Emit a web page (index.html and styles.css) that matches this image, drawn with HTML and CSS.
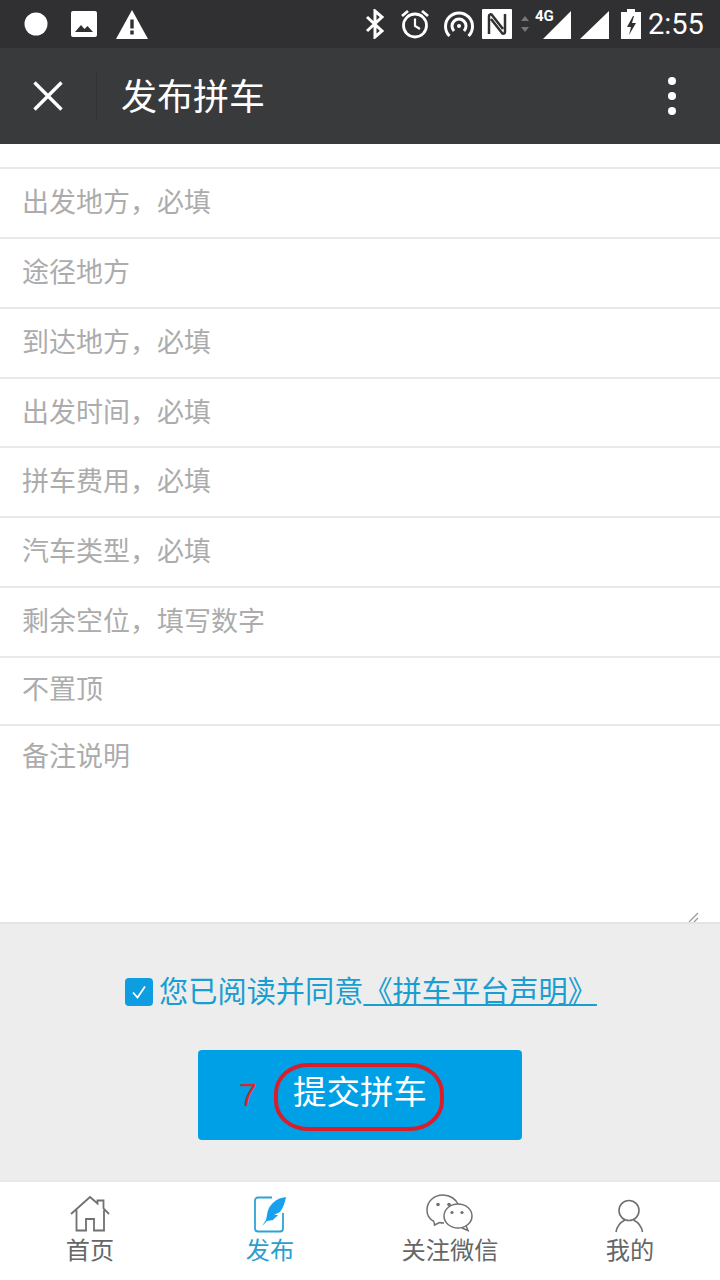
FILE: index.html
```html
<!DOCTYPE html>
<html lang="zh">
<head>
<meta charset="utf-8">
<title>发布拼车</title>
<link rel="stylesheet" href="styles.css">
</head>
<body>
<div class="app">
  <div class="status">
    <div class="status-left">
      <svg class="i" width="24" height="24" viewBox="0 0 24 24"><circle cx="12" cy="12" r="11.500" fill="#fff"/></svg>
      <svg class="i" width="26" height="26" viewBox="0 0 26 26"><rect width="26" height="26" rx="2" fill="#fff"/><path d="M4 21l6-7 3.500 4 3-3 5.500 6z" fill="#303033"/></svg>
      <svg class="i" width="32" height="29" viewBox="0 0 32 29"><path d="M16 0l16 29H0z" fill="#fff"/><rect x="14.300" y="9.500" width="3.400" height="9" fill="#303033"/><rect x="14.300" y="20.500" width="3.400" height="4" fill="#303033"/></svg>
    </div>
    <div class="status-right">
      <svg class="bt" width="20" height="30" viewBox="0 0 20 30"><path d="M2 8l15 14-7 6V2l7 6L2 22" fill="none" stroke="#fff" stroke-width="3"/></svg>
      <svg class="alarm" width="30" height="30" viewBox="0 0 30 30" fill="none" stroke="#fff"><circle cx="15" cy="16.500" r="11.500" stroke-width="2.800"/><path d="M15 9.500V17l5 3" stroke-width="2.200"/><path d="M2 7l6-5M28 7l-6-5" stroke-width="2.800"/></svg>
      <svg class="hot" width="30" height="28" viewBox="0 0 30 28" fill="none" stroke="#fff" stroke-width="3"><path d="M5.500 26a13.500 13.500 0 1 1 19 0"/><path d="M10 21a7 7 0 1 1 10 0"/><circle cx="15" cy="16" r="2" fill="#fff" stroke="none"/></svg>
      <svg class="nfc" width="30" height="30" viewBox="0 0 30 30"><rect width="30" height="30" rx="1" fill="#fff"/><path d="M7 25V7c0-2 2-2 3-1l11 14M23 5v18c0 2-2 2-3 1L9 10" fill="none" stroke="#303033" stroke-width="2.500"/></svg>
      <svg class="arrows" width="10" height="18" viewBox="0 0 10 18"><path d="M5 1l4 5H1zM5 17l4-5H1z" fill="#77777a"/></svg>
      <div class="sig4g"><span class="g4">4G</span><svg width="28" height="28" viewBox="0 0 28 28"><path d="M28 0v28H0z" fill="#fff"/></svg></div>
      <svg class="sig" width="29" height="28" viewBox="0 0 29 28"><path d="M29 0v28H0z" fill="#fff"/></svg>
      <svg class="bat" width="20" height="30" viewBox="0 0 20 30"><path d="M6 0h8v3h6v27H0V3h6z" fill="#fff"/><path d="M12 7l-6 11h4l-2 8 7-12h-4l2-7z" fill="#303033"/></svg>
      <span class="time">2:55</span>
    </div>
  </div>
  <div class="bar">
    <svg class="close" width="30" height="30" viewBox="0 0 30 30"><path d="M1.500 1.500l27 27M28.500 1.500l-27 27" stroke="#fff" stroke-width="3.400" fill="none"/></svg>
    <div class="bar-sep"></div>
    <div class="bar-title">发布拼车</div>
    <div class="dots"><i></i><i></i><i></i></div>
  </div>
  <div class="form">
    <div class="row row-cut"><span class="ph ph-cut">联系电话，必填</span></div>
    <div class="row"><span class="ph">出发地方，必填</span></div>
    <div class="row"><span class="ph">途径地方</span></div>
    <div class="row"><span class="ph">到达地方，必填</span></div>
    <div class="row row-s"><span class="ph">出发时间，必填</span></div>
    <div class="row"><span class="ph">拼车费用，必填</span></div>
    <div class="row"><span class="ph">汽车类型，必填</span></div>
    <div class="row"><span class="ph">剩余空位，填写数字</span></div>
    <div class="row row-t"><span class="ph">不置顶</span></div>
    <div class="note">
      <span class="ph">备注说明</span>
      <svg class="grip" width="12" height="10" viewBox="0 0 12 10"><path d="M2 10L11 1M7 10l4-4" stroke="#9a9a9a" stroke-width="1.300" fill="none"/></svg>
    </div>
  </div>
  <div class="submit-area">
    <div class="agree">
      <svg class="check" width="28" height="28" viewBox="0 0 28 28"><rect width="28" height="28" rx="4" fill="#0f9de2"/><path d="M8 14.500l4.500 5L20 8.500" stroke="#fff" stroke-width="1.800" fill="none"/></svg>
      <span class="agree-text">您已阅读并同意<a class="agree-link">《拼车平台声明》</a></span>
    </div>
    <div class="btn">
      <span class="btn-text">提交拼车</span>
      <span class="mark-num">7</span>
      <span class="mark-ring"></span>
    </div>
  </div>
  <div class="tabs">
    <div class="tab">
      <svg class="tab-ico" width="40" height="36" viewBox="0 0 40 36" fill="none" stroke="#707070" stroke-width="1.800"><path d="M1 18L20 1l7.500 6.500V4.500h6v8L39 18M6.500 14v20.500h9.500V23h8v11.500h10V14"/></svg>
      <span class="tab-label">首页</span>
    </div>
    <div class="tab tab-on">
      <svg class="tab-ico" width="40" height="36" viewBox="0 0 40 36" fill="none"><path d="M22 1.500H8a3 3 0 0 0-3 3v28a3 3 0 0 0 3 3h22a3 3 0 0 0 3-3V17" stroke="#2fa3d6" stroke-width="1.800"/><path d="M36 1c-10 1-18 8-19 18l-1 5-4 6 5-5 6-1c1-2 4-3 5-5l-4 0 6-3c3-4 5-9 6-15z" fill="#17a0ef"/></svg>
      <span class="tab-label">发布</span>
    </div>
    <div class="tab">
      <svg class="tab-ico tab-ico-tall" width="48" height="38" viewBox="0 0 48 38" fill="none" stroke="#707070" stroke-width="1.500"><path d="M8 27.500C3 25 1 21 1 16 1 7.500 8 1 17 1c7 0 13 4 15.500 10M8 27.500l.500 3.500 5-2.500c1.500.500 3 .500 4.500.500"/><ellipse cx="32" cy="22" rx="14" ry="12" fill="#fff"/><path d="M40 31.500l2 5-6-2.500"/><g fill="#707070" stroke="none"><circle cx="12" cy="10.500" r="1.800"/><circle cx="23" cy="10.500" r="1.800"/><circle cx="26" cy="18.500" r="1.600"/><circle cx="36" cy="18.500" r="1.600"/></g></svg>
      <span class="tab-label">关注微信</span>
    </div>
    <div class="tab">
      <svg class="tab-ico" width="40" height="36" viewBox="0 0 40 36" fill="none" stroke="#707070" stroke-width="1.600"><circle cx="19" cy="14.500" r="10"/><path d="M6 36c1-6 5-10 9-12M32.500 36c-1-6-5-10-9-12"/></svg>
      <span class="tab-label">我的</span>
    </div>
  </div>
</div>
</body>
</html>
```

FILE: styles.css
```css
* { box-sizing: border-box; }
html, body { margin: 0; padding: 0; }
body {
  width: 720px;
  height: 1280px;
  overflow: hidden;
  background: #fff;
  font-family: "Noto Sans CJK SC", "Noto Sans", sans-serif;
}
.app { display: flex; flex-direction: column; height: 1280px; }

.status {
  height: 48px;
  background: #303033;
  display: flex;
  justify-content: space-between;
  align-items: center;
  padding: 0 16px 0 24px;
  flex: none;
}
.status-left { display: flex; align-items: center; }
.status-left .i:nth-child(2) { margin: 0 19px 0 23px; }
.status-right { display: flex; align-items: center; }
.i, .status-right svg { display: block; }
.bt { margin-right: 15px; }
.alarm { margin-right: 14px; }
.hot { margin-right: 8px; }
.nfc { margin-right: 8px; }
.arrows { margin-right: 5px; }
.sig4g { position: relative; width: 36px; height: 28px; display: flex; justify-content: flex-end; margin-right: 9px; margin-top: 2px; }
.g4 { position: absolute; left: 0; top: -4px; font: 700 15px/18px "Roboto", sans-serif; color: #fff; }
.sig { margin-right: 12px; margin-top: 2px; }
.bat { margin-right: 7px; }
.time { font: 400 29px/36px "Roboto", sans-serif; color: #fff; width: 56px; }

.bar {
  height: 96px;
  background: #393a3c;
  display: flex;
  align-items: center;
  flex: none;
  padding-left: 33px;
}
.close { display: block; flex: none; }
.bar-sep { width: 1px; height: 48px; background: #333436; margin-left: 33px; }
.bar-title { margin-left: 24px; margin-bottom: 4px; font-size: 36px; line-height: 48px; color: #fff; flex: 1; }
.dots { display: flex; flex-direction: column; gap: 7px; margin-right: 44px; }
.dots i { display: block; width: 8px; height: 8px; border-radius: 50%; background: #fff; }

.form { flex: none; background: #fff; overflow: hidden; }
.row {
  height: 70px;
  border-bottom: 2px solid #e9e9e9;
  padding: 0 0 4px 22px;
  display: flex;
  align-items: center;
}
.row-s { height: 69px; }
.row-t { height: 68px; padding-bottom: 7px; }
.row-cut { height: 25px; overflow: hidden; align-items: flex-end; padding-bottom: 0; }
.ph { font-size: 27px; line-height: 40px; color: #acacac; white-space: nowrap; }
.ph-cut { margin-bottom: 19px; }
.note {
  height: 198px;
  padding: 9px 0 0 22px;
  position: relative;
  border-bottom: 2px solid #e4e4e4;
}
.note .ph { display: block; }
.grip { position: absolute; right: 21px; bottom: 0; display: block; }

.submit-area {
  flex: 1;
  background: #ededed;
  padding-top: 54px;
  display: flex;
  flex-direction: column;
  align-items: center;
}
.agree { display: flex; align-items: center; gap: 6px; height: 28px; padding-left: 2px; }
.check { display: block; flex: none; }
.agree-text { font-size: 29.200px; line-height: 40px; color: #1a9dd0; white-space: nowrap; position: relative; top: -3px; }
.agree-link { color: #1a9dd0; text-decoration: underline; }
.btn {
  position: relative;
  margin-top: 44px;
  width: 324px;
  height: 90px;
  background: #00a0e6;
  border-radius: 4px;
  display: flex;
  align-items: center;
  justify-content: center;
}
.btn-text { font-size: 33.500px; line-height: 44px; color: #fff; position: relative; top: -5px; }
.mark-num { position: absolute; left: 41px; top: 25px; font: 400 32px/40px "Liberation Sans", sans-serif; color: #d9262c; }
.mark-ring {
  position: absolute;
  left: 76px;
  top: 13px;
  width: 170px;
  height: 68px;
  border: 4px solid #d81e2a;
  border-radius: 34px / 30px;
}

.tabs {
  flex: none;
  height: 100px;
  background: #fff;
  border-top: 2px solid #e9e9e9;
  display: grid;
  grid-template-columns: repeat(4, 1fr);
}
.tab { display: flex; flex-direction: column; align-items: center; padding-top: 14px; }
.tab-ico { display: block; flex: none; overflow: visible; }
.tab-ico-tall { margin-top: -2px; }
.tab-label { font-size: 24.200px; line-height: 34px; color: #666; white-space: nowrap; }
.tab-on .tab-label { color: #2a9fd0; }
```
